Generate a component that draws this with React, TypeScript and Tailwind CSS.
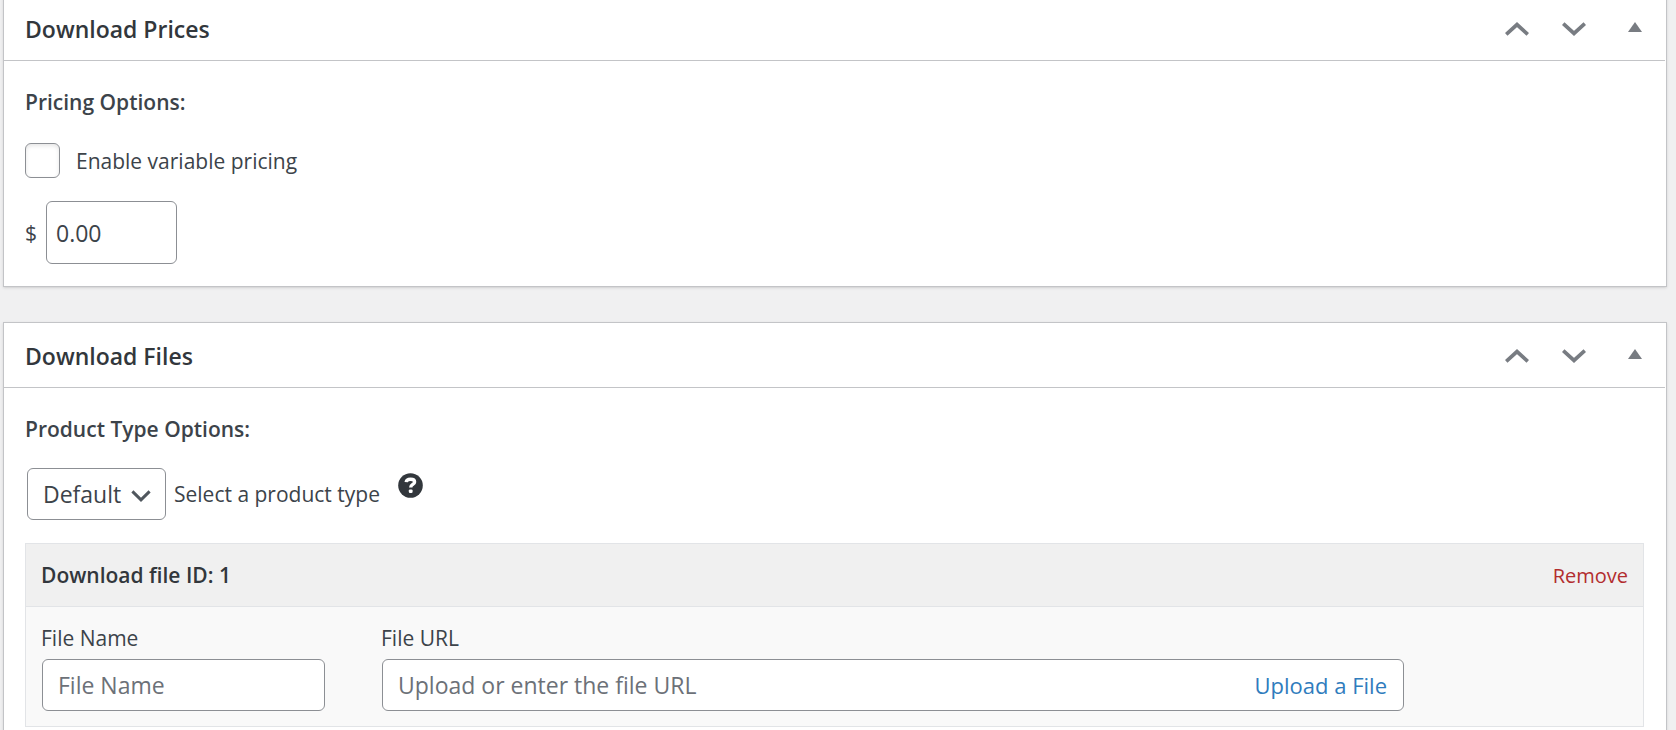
import React, { useState } from 'react';

interface MetaBoxProps {
    title: string;
    className?: string;
    children: React.ReactNode;
}

const MetaBox: React.FC<MetaBoxProps> = ({ title, className, children }) => (
    <section className={`border border-[#c3c4c7] bg-white shadow-sm ${className ?? ''}`}>
        <header className="mr-px flex h-[65px] items-center justify-between border-b border-[#c3c4c7] pt-0.5 pl-[21px] pr-5">
            <h2 className="text-[23px] leading-8 font-semibold text-[#32373c]">{title}</h2>
            <div className="flex items-center text-[#787c82]">
                <button type="button" aria-label="Move up" className="flex w-[57px] justify-center">
                    <svg width="24" height="14" viewBox="0 0 24 14" fill="none" stroke="currentColor" strokeWidth="3.8">
                        <path d="M1.2 12.4 12 2.6 22.8 12.4" />
                    </svg>
                </button>
                <button type="button" aria-label="Move down" className="flex w-[57px] justify-center">
                    <svg width="24" height="14" viewBox="0 0 24 14" fill="none" stroke="currentColor" strokeWidth="3.8">
                        <path d="M1.2 1.6 12 11.4 22.8 1.6" />
                    </svg>
                </button>
                <button type="button" aria-label="Toggle panel" className="flex w-[43px] justify-end pb-1">
                    <svg width="14" height="10" viewBox="0 0 14 10" fill="currentColor" className="mr-[3px]">
                        <path d="M7 0 14 10H0z" />
                    </svg>
                </button>
            </div>
        </header>
        {children}
    </section>
);

const fieldClass = 'rounded-md border border-[#8c8f94] bg-white text-[23px] text-[#3c434a] outline-none placeholder:text-[#6c7178]';

export default function App() {
    const [variablePricing, setVariablePricing] = useState(false);
    const [price, setPrice] = useState('0.00');
    const [fileName, setFileName] = useState('');
    const [fileUrl, setFileUrl] = useState('');

    return (
        <div className="h-screen overflow-hidden bg-[#f0f0f1] pl-[3px] pr-[9px] font-['Open_Sans','Noto_Sans',sans-serif] text-[21px] leading-8 text-[#3c434a]">
            {/* First box is scrolled slightly past the top edge */}
            <MetaBox title="Download Prices" className="-mt-[5px]">
                <div className="px-[21px] pt-[25px] pb-[22px]">
                    <h3 className="font-semibold">Pricing Options:</h3>
                    <label className="mt-[25px] flex items-center gap-4">
                        <input
                            type="checkbox"
                            checked={variablePricing}
                            onChange={(e) => setVariablePricing(e.target.checked)}
                            className="size-[35px] appearance-none rounded-md border border-[#8c8f94] bg-white shadow-[inset_0_2px_4px_rgba(0,0,0,0.1)] checked:bg-[#2271b1]"
                        />
                        <span>Enable variable pricing</span>
                    </label>
                    <div className="mt-[23px] flex items-center gap-[9px]">
                        <label htmlFor="price">$</label>
                        <input
                            id="price"
                            type="text"
                            value={price}
                            onChange={(e) => setPrice(e.target.value)}
                            className={`h-[63px] w-[131px] px-[9px] ${fieldClass}`}
                        />
                    </div>
                </div>
            </MetaBox>

            <MetaBox title="Download Files" className="mt-[35px]">
                <div className="pt-[25px] pr-[22px] pb-8 pl-[21px]">
                    <h3 className="font-semibold">Product Type Options:</h3>
                    <div className="mt-[23px] flex items-center pl-0.5">
                        <div className="relative">
                            <select id="product-type" className={`h-[52px] w-[139px] appearance-none pl-[15px] ${fieldClass}`}>
                                <option>Default</option>
                                <option>Bundle</option>
                            </select>
                            <svg
                                width="20"
                                height="12"
                                viewBox="0 0 20 12"
                                fill="none"
                                stroke="#50575e"
                                strokeWidth="3"
                                className="pointer-events-none absolute top-[22px] right-[15px]"
                            >
                                <path d="M1.4 1.4 10 9.8 18.6 1.4" />
                            </svg>
                        </div>
                        <label htmlFor="product-type" className="ml-2">Select a product type</label>
                        <svg width="25" height="25" viewBox="0 0 25 25" className="mb-[18px] ml-[18px]" role="img" aria-label="Help">
                            <circle cx="12.5" cy="12.5" r="12.3" fill="#32373c" />
                            <path
                                d="M8.200 9.200C8.400 7 10.200 6.200 12.600 6.200c2.500 0 4 1 4 2.700 0 2.700-3.900 2.400-3.900 5.600"
                                fill="none"
                                stroke="#fff"
                                strokeWidth="3.4"
                            />
                            <rect x="10.8" y="16.4" width="3.8" height="3.6" rx="1.2" fill="#fff" />
                        </svg>
                    </div>

                    <div className="mt-[23px] border border-[#e2e4e7] bg-[#f9f9f9]">
                        <div className="flex h-[63px] items-center justify-between border-b border-[#e2e4e7] bg-[#f0f0f0] px-[15px]">
                            <h4 className="font-semibold text-[#32373c]">Download file ID: 1</h4>
                            <button type="button" className="pt-0.5 text-[20px] text-[#b32d2e]">Remove</button>
                        </div>
                        <div className="flex gap-14 px-[15px] pt-[15px] pb-[15px]">
                            <div className="flex w-[284px] flex-col gap-[5px]">
                                <label htmlFor="file-name">File Name</label>
                                <input
                                    id="file-name"
                                    type="text"
                                    placeholder="File Name"
                                    value={fileName}
                                    onChange={(e) => setFileName(e.target.value)}
                                    className={`ml-px h-[52px] px-[15px] ${fieldClass}`}
                                />
                            </div>
                            <div className="mr-56 flex flex-1 flex-col gap-[5px]">
                                <label htmlFor="file-url">File URL</label>
                                <div className={`ml-px flex h-[52px] items-center pr-4 ${fieldClass}`}>
                                    <input
                                        id="file-url"
                                        type="text"
                                        placeholder="Upload or enter the file URL"
                                        value={fileUrl}
                                        onChange={(e) => setFileUrl(e.target.value)}
                                        className="h-full min-w-0 flex-1 bg-transparent px-[15px] outline-none placeholder:text-[#6c7178]"
                                    />
                                    <button type="button" className="text-[22px] text-[#2f7cbd]">Upload a File</button>
                                </div>
                            </div>
                        </div>
                    </div>
                </div>
            </MetaBox>
        </div>
    );
}
